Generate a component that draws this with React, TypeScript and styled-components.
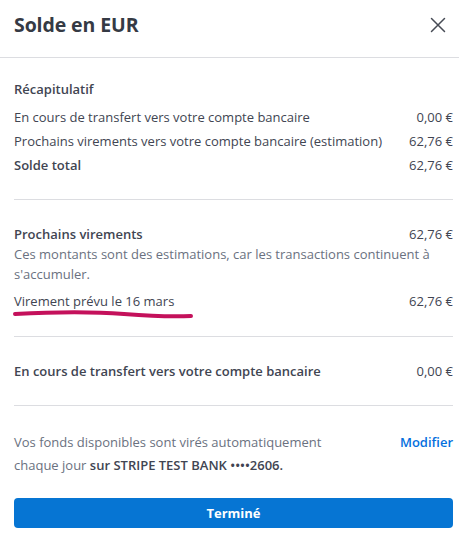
import React from "react"
import styled, { createGlobalStyle } from "styled-components"

const GlobalStyle = createGlobalStyle`
  html, body {
    margin: 0;
    padding: 0;
    background: #ffffff;
  }
  body {
    font-family: "Open Sans", "Noto Sans", "Liberation Sans", sans-serif;
    color: #414552;
    -webkit-font-smoothing: antialiased;
  }
`

const Panel = styled.div`
  width: 459px;
  background: #fff;
`

const Header = styled.header`
  height: 58px;
  box-sizing: border-box;
  display: flex;
  align-items: center;
  justify-content: space-between;
  padding: 0 11px 8px 14px;
  border-bottom: 1px solid #dcdde1;
`

const Title = styled.h1`
  margin: 0;
  font-size: 19.5px;
  font-weight: 700;
  color: #353a44;
  letter-spacing: -0.1px;
`

const CloseButton = styled.button`
  border: none;
  background: none;
  padding: 0;
  width: 20px;
  height: 20px;
  display: flex;
  align-items: center;
  justify-content: center;
  color: #474b55;
  cursor: pointer;
`

const Body = styled.div`
  padding: 0 6px 0 14px;
`

const Section = styled.section<{ $top?: number; $bottom?: number }>`
  padding: ${(p) => p.$top ?? 24}px 0 ${(p) => p.$bottom ?? 24}px;
  border-bottom: 1px solid #dcdde1;
`

const SectionLabel = styled.div`
  font-size: 13px;
  font-weight: 600;
  line-height: 20px;
  margin-bottom: 6px;
`

const Row = styled.div<{ $strong?: boolean; $height?: number }>`
  display: flex;
  justify-content: space-between;
  align-items: center;
  font-size: 13px;
  line-height: ${(p) => p.$height ?? 24}px;
  font-weight: ${(p) => (p.$strong ? 600 : 400)};
  position: relative;
`

const Amount = styled.span`
  white-space: nowrap;
  padding-left: 12px;
  font-weight: 500;
`

const Hint = styled.p`
  margin: 0;
  font-size: 13px;
  line-height: 20px;
  color: #6a7180;
  padding-right: 8px;
`

const ScheduledRow = styled(Row)`
  margin-top: 7px;
  color: #414552;
`

const Scribble = styled.svg`
  position: absolute;
  left: -2px;
  top: 18px;
  pointer-events: none;
`

const Footer = styled.div`
  padding: 25px 0 0;
  display: flex;
  justify-content: space-between;
  align-items: flex-start;
  gap: 16px;
`

const FooterText = styled.p`
  margin: 0;
  font-size: 13px;
  line-height: 23px;
  color: #6a7180;
  max-width: 330px;

  strong {
    font-weight: 600;
    color: #414552;
  }
`

const LinkButton = styled.a`
  font-size: 13px;
  line-height: 23px;
  font-weight: 600;
  color: #0570de;
  text-decoration: none;
  white-space: nowrap;
`

const PrimaryButton = styled.button`
  display: block;
  width: 100%;
  height: 30px;
  margin: 21px 0 17px;
  border: none;
  border-radius: 4px;
  background: #0675d3;
  color: #fff;
  font-family: inherit;
  font-size: 13px;
  font-weight: 700;
  cursor: pointer;
`

export default function App() {
  return (
    <>
      <GlobalStyle />
      <Panel>
        <Header>
          <Title>Solde en EUR</Title>
          <CloseButton aria-label="Fermer">
            <svg width="16" height="16" viewBox="0 0 16 16">
              <path d="M1.5 1.5 L14.5 14.5 M14.5 1.5 L1.5 14.5" stroke="currentColor" strokeWidth="1.5" strokeLinecap="round" />
            </svg>
          </CloseButton>
        </Header>
        <Body>
          <Section $top={21} $bottom={22}>
            <SectionLabel>Récapitulatif</SectionLabel>
            <Row>
              <span>En cours de transfert vers votre compte bancaire</span>
              <Amount>0,00 €</Amount>
            </Row>
            <Row>
              <span>Prochains virements vers votre compte bancaire (estimation)</span>
              <Amount>62,76 €</Amount>
            </Row>
            <Row $strong>
              <span>Solde total</span>
              <Amount>62,76 €</Amount>
            </Row>
          </Section>

          <Section $bottom={25}>
            <Row $strong $height={20}>
              <span>Prochains virements</span>
              <Amount>62,76 €</Amount>
            </Row>
            <Hint>Ces montants sont des estimations, car les transactions continuent à s'accumuler.</Hint>
            <ScheduledRow $height={20}>
              <span>Virement prévu le 16 mars</span>
              <Amount>62,76 €</Amount>
              <Scribble width="184" height="12" viewBox="0 0 184 12">
                <path
                  d="M3 5 C 40 3, 80 2.5, 112 5 S 160 8, 179 7"
                  fill="none"
                  stroke="#c4115b"
                  strokeWidth="4"
                  strokeLinecap="round"
                />
              </Scribble>
            </ScheduledRow>
          </Section>

          <Section>
            <Row $strong $height={20}>
              <span>En cours de transfert vers votre compte bancaire</span>
              <Amount>0,00 €</Amount>
            </Row>
          </Section>

          <Footer>
            <FooterText>
              Vos fonds disponibles sont virés automatiquement chaque jour{" "}
              <strong>sur STRIPE TEST BANK ••••2606.</strong>
            </FooterText>
            <LinkButton href="#">Modifier</LinkButton>
          </Footer>
          <PrimaryButton>Terminé</PrimaryButton>
        </Body>
      </Panel>
    </>
  )
}
